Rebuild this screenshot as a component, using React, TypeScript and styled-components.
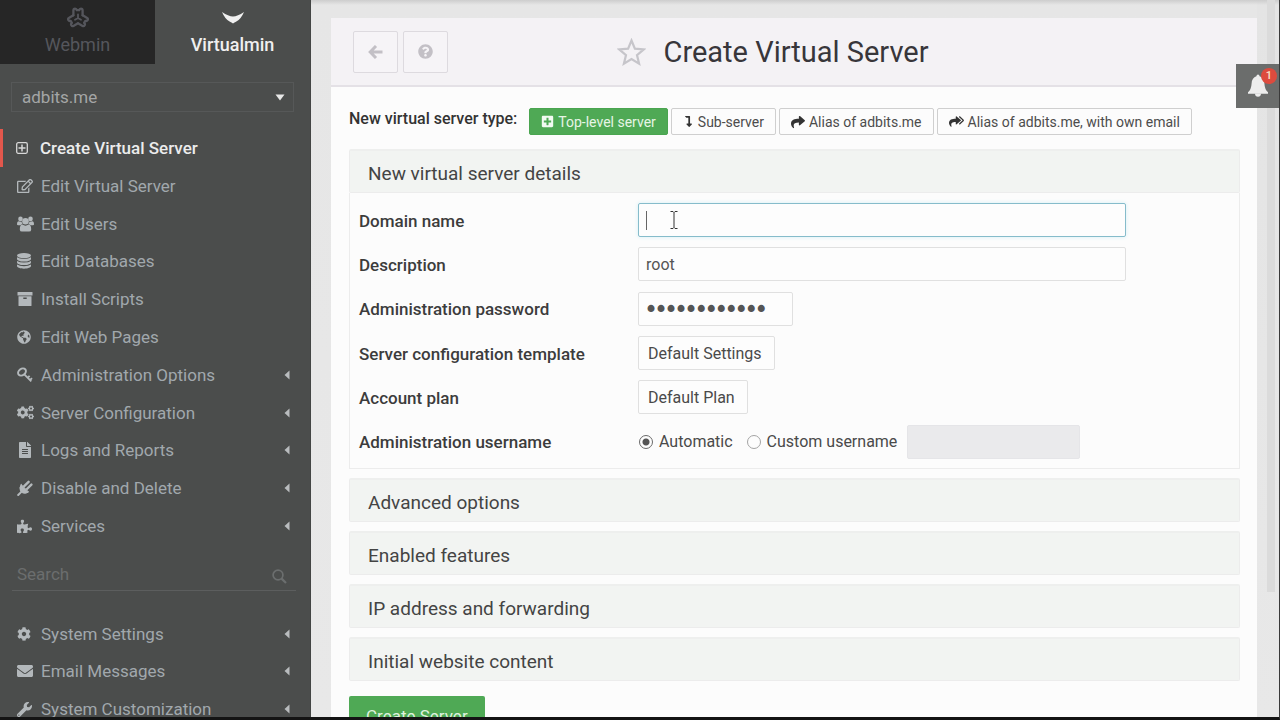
import React from "react";
import styled, { createGlobalStyle } from "styled-components";
import {
  FaRegEdit, FaGlobeAmericas, FaCogs, FaFileAlt,
  FaPuzzlePiece, FaCog, FaEnvelope, FaWrench, FaShare, FaQuestionCircle,
  FaPlusSquare, FaLevelDownAlt,
} from "react-icons/fa";

const GlobalStyle = createGlobalStyle`
  *, *::before, *::after { box-sizing: border-box; }
  body { margin: 0; background: #141414; overflow: hidden; }
  body, button, input, select { font-family: Roboto, "Liberation Sans", sans-serif; }
`;

const Frame = styled.div`
  height: 100vh;
  display: flex;
  border-bottom: 3px solid #141414;
  border-right: 1px solid #3a3a3a;
  overflow: hidden;
  position: relative;
`;

const Sidebar = styled.aside`
  flex: 0 0 311px;
  background: #4b4d4c;
  border-right: 1px solid #434544;
  overflow: hidden;
`;

const Tabs = styled.nav`
  display: grid;
  grid-template-columns: 1fr 1fr;
  height: 64px;
`;

const Tab = styled.a<{ $active?: boolean }>`
  display: flex;
  flex-direction: column;
  align-items: center;
  justify-content: space-between;
  padding: 7px 0 8px;
  text-decoration: none;
  font-size: 18px;
  line-height: 22px;
  font-weight: ${(p) => (p.$active ? 500 : 400)};
  color: ${(p) => (p.$active ? "#f0f0f0" : "#55565c")};
  background: ${(p) => (p.$active ? "transparent" : "#262626")};
`;

const DomainPicker = styled.div`
  margin: 18px 16px 17px 11px;
  position: relative;
`;

const DomainSelect = styled.select`
  appearance: none;
  display: block;
  width: 100%;
  height: 30px;
  padding: 0 10px;
  border: 1px solid #565858;
  border-radius: 0;
  background: transparent;
  color: #a4a6a6;
  font-size: 17px;
`;

const PickerArrow = styled.svg`
  position: absolute;
  right: 9px;
  top: 12px;
  pointer-events: none;
`;

const Menu = styled.ul<{ $height: number }>`
  list-style: none;
  margin: 0;
  padding: 0;
  display: grid;
  grid-auto-rows: 1fr;
  min-height: ${(p) => p.$height}px;
`;

const MenuItem = styled.li`
  display: flex;
`;

const MenuLink = styled.a<{ $active?: boolean }>`
  flex: 1;
  display: flex;
  align-items: center;
  padding: 0 20px 0 ${(p) => (p.$active ? 13 : 17)}px;
  border-left: ${(p) => (p.$active ? "3px solid #e2574c" : "0")};
  color: ${(p) => (p.$active ? "#ececec" : "#a1a8ad")};
  font-size: 17px;
  line-height: 22px;
  font-weight: ${(p) => (p.$active ? 500 : 400)};
  text-decoration: none;
`;

const MenuIcon = styled.span`
  flex: 0 0 24px;
  display: flex;
  align-items: center;
  color: #b3b8bb;
`;

const MenuText = styled.span`
  flex: 1;
  white-space: nowrap;
`;

const SearchBar = styled.div`
  display: flex;
  align-items: flex-end;
  justify-content: space-between;
  height: 34px;
  margin: 12px 14px 24px 12px;
  padding: 0 9px 6px 5px;
  border-bottom: 1px solid #5c5e5e;
  color: #6b6e6e;
`;

const SearchInput = styled.input`
  flex: 1;
  min-width: 0;
  height: 20px;
  border: 0;
  padding: 0;
  outline: 0;
  background: transparent;
  font-size: 17px;
  color: #a1a8ad;
  &::placeholder { color: #6b6e6e; }
`;

const Main = styled.main`
  flex: 1;
  min-width: 0;
  padding: 18px 0 0 20px;
  background: linear-gradient(#cdcdcd, #e6e6e6 5px, #e8e8e8 100%);
`;

const Panel = styled.section`
  background: #fcfcfc;
  min-height: 100%;
`;

const PanelHeader = styled.header`
  display: flex;
  align-items: center;
  height: 69px;
  padding: 0 165px 0 22px;
  background: #f4f2f5;
  border-bottom: 2px solid #e4e1e6;
`;

const HeaderButton = styled.button`
  width: 45px;
  height: 42px;
  margin-right: 5px;
  display: flex;
  align-items: center;
  justify-content: center;
  background: #f6f4f7;
  border: 1px solid #dddadf;
  border-radius: 2px;
  color: #c3c0c6;
  padding: 0;
`;

const TitleGroup = styled.div`
  flex: 1;
  display: flex;
  align-items: center;
  justify-content: center;
  gap: 18px;
  color: #c6c5ca;
`;

const Title = styled.h1`
  margin: 0;
  color: #38363a;
  font-size: 29px;
  line-height: 36px;
  font-weight: 400;
  white-space: nowrap;
`;

const PanelBody = styled.form`
  padding: 21px 17px 0 18px;
`;

const TypeBar = styled.div`
  display: flex;
  align-items: flex-start;
  gap: 3px;
  margin-bottom: 14px;
`;

const TypeLabel = styled.span`
  margin-right: 9px;
  color: #333;
  font-size: 16px;
  line-height: 22px;
  font-weight: 500;
  white-space: nowrap;
`;

const TypeButton = styled.button<{ $primary?: boolean }>`
  display: flex;
  align-items: center;
  gap: 4px;
  height: 27px;
  padding: 0 11px;
  border: 1px solid ${(p) => (p.$primary ? "#4aa550" : "#cfcfcf")};
  border-radius: 2px;
  background: ${(p) => (p.$primary ? "#4fa955" : "#fcfcfc")};
  color: ${(p) => (p.$primary ? "#e6f5e6" : "#4c4c4c")};
  font-size: 14px;
  white-space: nowrap;
  svg { color: ${(p) => (p.$primary ? "#f2fbf2" : "#333")}; }
`;

const Sections = styled.div`
  display: flex;
  flex-direction: column;
  gap: 9px;
`;

const Section = styled.section``;

const SectionToggle = styled.button`
  display: block;
  width: 100%;
  height: 44px;
  padding: 3px 18px 0;
  text-align: left;
  font-size: 19px;
  color: #444;
  background: #f2f4f2;
  border: 1px solid #ececec;
  border-top: 2px solid #eeefee;
  border-radius: 2px;
`;

const Fields = styled.div`
  display: grid;
  grid-auto-rows: 1fr;
  min-height: 276px;
  padding: 5px 9px 4px;
  border: 1px solid #ececec;
  border-top: 0;
`;

const Field = styled.div`
  display: grid;
  grid-template-columns: 279px 1fr;
  align-items: center;
`;

const FieldLabel = styled.label`
  padding-top: 1px;
  color: #3c3c3c;
  font-size: 17px;
  line-height: 22px;
  font-weight: 500;
`;

const Control = styled.div`
  display: flex;
  align-items: center;
  position: relative;
`;

const TextInput = styled.input<{ $width: number; $focus?: boolean }>`
  width: ${(p) => p.$width}px;
  height: 34px;
  padding: 0 7px;
  border: 1px solid ${(p) => (p.$focus ? "#86bccb" : "#e0e0e0")};
  border-radius: 2px;
  outline: 0;
  background: #fdfdfd;
  box-shadow: ${(p) => (p.$focus ? "0 0 4px #d5f0f6" : "none")};
  color: #555;
  font-size: 16px;
  caret-color: transparent;
  &[type="password"] {
    font-family: "DejaVu Sans", sans-serif;
    font-size: 17px;
    -webkit-text-stroke: 2px #555;
  }
  &:disabled {
    margin-left: 10px;
    border-color: #e5e5e8;
    background: #eaeaec;
  }
`;

const PlainSelect = styled.select`
  appearance: none;
  height: 34px;
  padding: 0 12px 0 9px;
  border: 1px solid #e0e0e0;
  border-radius: 2px;
  background: #fdfdfd;
  color: #4a4a4a;
  font-size: 16px;
`;

const Choice = styled.label`
  display: flex;
  align-items: center;
  gap: 5px;
  margin-right: 13px;
  color: #4a4a4a;
  font-size: 16px;
  line-height: 22px;
  &:last-of-type { margin-right: 0; }
`;

const Radio = styled.input`
  appearance: none;
  width: 14px;
  height: 14px;
  margin: 0 1px;
  border: 1px solid #a4a4a4;
  border-radius: 50%;
  background: #fdfdfd;
  &:checked {
    border-color: #6a6a6a;
    background: radial-gradient(circle, #555 0 3px, #fdfdfd 4px);
  }
`;

const Caret = styled.span`
  position: absolute;
  left: 8px;
  top: 8px;
  width: 1px;
  height: 19px;
  background: #666;
`;

const Pointer = styled.svg`
  position: absolute;
  left: 32px;
  top: 8px;
`;

const SubmitButton = styled.button`
  margin-top: 15px;
  height: 40px;
  padding: 0 17px;
  border: 0;
  border-radius: 2px;
  background: #4fa955;
  color: #dff2df;
  font-size: 17px;
`;

const Rail = styled.div`
  flex: 0 0 22px;
  padding: 0 4px 0 10px;
  background: linear-gradient(#cdcdcd, #e4e4e4 5px, #e8e8e8 100%);
`;

const Thumb = styled.div`
  height: 82.5%;
  background: #dbdbdb;
`;

const Notice = styled.button`
  position: absolute;
  right: 0;
  top: 64px;
  width: 43px;
  height: 44px;
  display: flex;
  align-items: center;
  justify-content: center;
  padding: 0;
  border: 0;
  background: #6b6d6c;
  color: #ededed;
`;

const NoticeBadge = styled.span`
  position: absolute;
  top: 4px;
  right: 2px;
  width: 16px;
  height: 16px;
  border-radius: 50%;
  background: #dd4b3e;
  color: #f8e3c8;
  font-size: 11px;
  font-weight: 500;
  line-height: 16px;
  text-align: center;
`;

const WebminLogo = () => (
  <svg width="22" height="21" viewBox="-11 -11 22 21" fill="none" stroke="currentColor" strokeWidth="2.300" strokeLinejoin="round" strokeLinecap="round">
    {[0, 120, 240].map((a) => (
      <path key={a} transform={`rotate(${a})`} d="M-4.600 -2.700V-7.500Q-4.600 -9.400 -2.900 -9.400Q-1.500 -9.400 -1.200 -7.800H1.200Q1.500 -9.400 2.900 -9.400Q4.600 -9.400 4.600 -7.500V-2.700" />
    ))}
    <path d="M0 0V-3.500M0 0L3 1.750M0 0L-3 1.750" strokeWidth="1.800" />
  </svg>
);

const VirtualminLogo = () => (
  <svg width="22" height="21" viewBox="0 0 22 21" fill="currentColor">
    <path d="M0 5Q6.500 9.400 11 9.600Q15.500 9.400 22 5Q18.800 12.600 14 14.800Q12.500 15.400 11 16.400Q9.500 15.400 8 14.800Q3.200 12.600 0 5Z" />
  </svg>
);

const StarOutline = () => (
  <svg width="29" height="28" viewBox="0 0 29 28" fill="none" stroke="currentColor" strokeWidth="2.200" aria-hidden="true">
    <path d="M14.500 2.500L17.900 10.700L26.800 11.400L20 17.100L22.100 25.700L14.500 21.100L6.900 25.700L9 17.100L2.200 11.400L11.100 10.700Z" />
  </svg>
);

const PlusBox = () => (
  <svg width="12" height="12" viewBox="0 0 12 12" fill="none" stroke="#d8d8d8">
    <rect x="0.700" y="0.700" width="10.600" height="10.600" rx="1.500" strokeWidth="1.300" />
    <path d="M6 2.500V9.500M2.500 6H9.500" strokeWidth="1.500" />
  </svg>
);

const UsersIcon = () => (
  <svg width="17" height="16" viewBox="0 0 17 16" fill="currentColor">
    <circle cx="3.500" cy="2.900" r="2.300" />
    <circle cx="13.500" cy="2.900" r="2.300" />
    <path d="M0 8.500Q0 5.300 1.800 5.300Q3.200 6.100 4.600 5.600Q4.600 7 5.600 8Q4.200 8.200 3.400 9.300H1.200Q0 9.300 0 8.500ZM17 8.500Q17 5.300 15.200 5.300Q13.800 6.100 12.400 5.600Q12.400 7 11.400 8Q12.800 8.200 13.600 9.300H15.800Q17 9.300 17 8.500Z" />
    <circle cx="8.500" cy="5.200" r="3.300" />
    <path d="M2.800 13.400Q2.800 8.600 5.500 8.600Q8.500 10.700 11.500 8.600Q14.200 8.600 14.200 13.400Q14.200 15.600 12 15.600H5Q2.800 15.600 2.800 13.400Z" />
  </svg>
);

const DatabaseIcon = () => (
  <svg width="14" height="16" viewBox="0 0 14 16" fill="currentColor">
    <ellipse cx="7" cy="2.600" rx="7" ry="2.600" />
    {[0, 3.6, 7.2].map((dy) => (
      <path key={dy} transform={`translate(0 ${dy})`} d="M0 4.300Q2.500 6 7 6Q11.500 6 14 4.300V5.900C14 7.300 10.900 8.500 7 8.500S0 7.300 0 5.900Z" />
    ))}
  </svg>
);

const ArchiveIcon = () => (
  <svg width="16" height="14" viewBox="0 0 16 14" fill="currentColor">
    <path d="M1 0H15Q15.500 0 15.500 0.500V3.500H0.500V0.500Q0.500 0 1 0Z" />
    <path fillRule="evenodd" d="M1.500 4.300H14.500V13.500Q14.500 14 14 14H2Q1.500 14 1.500 13.500ZM6.300 5.600V6.900H9.700V5.600Z" />
  </svg>
);

const PlugIcon = () => (
  <svg width="16" height="16" viewBox="0 0 16 16" fill="currentColor" stroke="currentColor" strokeLinecap="round">
    <path d="M4.200 4.600L11.600 12Q8.500 14.300 5.200 12.700L3.500 11Q1.900 7.700 4.200 4.600Z" strokeWidth="1" strokeLinejoin="round" />
    <path d="M7.200 6.200L11.600 1.800M10 9L14.400 4.600" strokeWidth="2.400" />
    <path d="M4.600 11.600L1.200 15" strokeWidth="2" />
  </svg>
);

const KeyIcon = () => (
  <svg width="16" height="16" viewBox="0 0 16 16" fill="none" stroke="currentColor">
    <ellipse cx="5" cy="5" rx="4.200" ry="3.200" transform="rotate(-38 5 5)" strokeWidth="2" />
    <path d="M7.300 7.300L14.300 14.300M10.600 10.800L12.600 8.800M13 13.200L15 11.200" strokeWidth="1.900" />
  </svg>
);

const SearchIcon = () => (
  <svg width="15" height="15" viewBox="0 0 15 15" fill="none" stroke="currentColor" strokeWidth="1.700" aria-hidden="true">
    <circle cx="6" cy="6" r="4.900" />
    <path d="M9.600 9.600L14 14" strokeWidth="2.200" />
  </svg>
);

const BackArrow = () => (
  <svg width="15" height="14" viewBox="0 0 15 14" fill="none" stroke="currentColor" strokeWidth="3">
    <path d="M8 1L2.200 7L8 13M2.500 7H14.500" />
  </svg>
);

const BellIcon = () => (
  <svg width="22" height="24" viewBox="0 0 22 24" fill="currentColor">
    <path d="M11 0.500Q12.400 0.500 12.600 2.300Q17 3.500 17.400 9.500Q17.700 15.500 21 18.300V19.800H1V18.300Q4.300 15.500 4.600 9.500Q5 3.500 9.400 2.300Q9.600 0.500 11 0.500Z" />
    <path d="M8 19.500H14Q13.800 22.800 11 22.800Q8.200 22.800 8 19.500Z" />
  </svg>
);

const DoubleShare = () => (
  <svg width="15" height="13" viewBox="0 0 640 512" fill="currentColor">
    <path d="M503.700 189.800L327.700 37.800C312.300 24.500 288 35.300 288 56v80.100C127.400 137.900 0 170.100 0 322.300c0 61.400 39.600 122.300 83.300 154.100 13.700 9.900 33.100-2.500 28.100-18.600C66.100 312.800 132.900 274.300 288 272.100V360c0 20.700 24.300 31.500 39.700 18.200l176-152c11.100-9.600 11.100-26.800 0-36.400z" />
    <path d="M440 45L600 190Q618 208 600 226L440 371" fill="none" stroke="currentColor" strokeWidth="52" />
  </svg>
);

const Collapsed = () => (
  <svg width="6" height="10" viewBox="0 0 6 10" fill="#b9bcbe" aria-hidden="true">
    <path d="M5.500 0.500V9.500L0.500 5Z" />
  </svg>
);

type Entry = { label: string; icon: React.ReactNode; active?: boolean; sub?: boolean };

const serverMenu: Entry[] = [
  { label: "Create Virtual Server", icon: <PlusBox />, active: true },
  { label: "Edit Virtual Server", icon: <FaRegEdit size={16} /> },
  { label: "Edit Users", icon: <UsersIcon /> },
  { label: "Edit Databases", icon: <DatabaseIcon /> },
  { label: "Install Scripts", icon: <ArchiveIcon /> },
  { label: "Edit Web Pages", icon: <FaGlobeAmericas size={14} /> },
  { label: "Administration Options", icon: <KeyIcon />, sub: true },
  { label: "Server Configuration", icon: <FaCogs size={17} />, sub: true },
  { label: "Logs and Reports", icon: <FaFileAlt size={16} />, sub: true },
  { label: "Disable and Delete", icon: <PlugIcon />, sub: true },
  { label: "Services", icon: <FaPuzzlePiece size={15} />, sub: true },
];

const systemMenu: Entry[] = [
  { label: "System Settings", icon: <FaCog size={14} />, sub: true },
  { label: "Email Messages", icon: <FaEnvelope size={16} />, sub: true },
  { label: "System Customization", icon: <FaWrench size={15} />, sub: true },
];

const MenuList = ({ items, height }: { items: Entry[]; height: number }) => (
  <Menu $height={height}>
    {items.map((item) => (
      <MenuItem key={item.label}>
        <MenuLink href="#" $active={item.active}>
          <MenuIcon>{item.icon}</MenuIcon>
          <MenuText>{item.label}</MenuText>
          {item.sub && <Collapsed />}
        </MenuLink>
      </MenuItem>
    ))}
  </Menu>
);

export default function App() {
  return (
    <>
      <GlobalStyle />
      <Frame>
        <Sidebar>
          <Tabs>
            <Tab href="#"><WebminLogo />Webmin</Tab>
            <Tab href="#" $active><VirtualminLogo />Virtualmin</Tab>
          </Tabs>
          <DomainPicker>
            <DomainSelect aria-label="Domain">
              <option>adbits.me</option>
            </DomainSelect>
            <PickerArrow width="10" height="7" viewBox="0 0 10 7" fill="#e8e8e8"><path d="M0.500 0.500H9.500L5 6.500Z" /></PickerArrow>
          </DomainPicker>
          <MenuList items={serverMenu} height={416} />
          <SearchBar>
            <SearchInput type="text" placeholder="Search" aria-label="Search" />
            <SearchIcon />
          </SearchBar>
          <MenuList items={systemMenu} height={113} />
        </Sidebar>
        <Main>
          <Panel>
            <PanelHeader>
              <HeaderButton type="button" aria-label="Back"><BackArrow /></HeaderButton>
              <HeaderButton type="button" aria-label="Help"><FaQuestionCircle size={15} /></HeaderButton>
              <TitleGroup>
                <StarOutline />
                <Title>Create Virtual Server</Title>
              </TitleGroup>
            </PanelHeader>
            <PanelBody>
              <TypeBar>
                <TypeLabel>New virtual server type:</TypeLabel>
                <TypeButton type="button" $primary><FaPlusSquare size={13} />Top-level server</TypeButton>
                <TypeButton type="button"><FaLevelDownAlt size={11} />Sub-server</TypeButton>
                <TypeButton type="button"><FaShare size={14} />Alias of adbits.me</TypeButton>
                <TypeButton type="button"><DoubleShare />Alias of adbits.me, with own email</TypeButton>
              </TypeBar>
              <Sections>
                <Section>
                  <SectionToggle type="button">New virtual server details</SectionToggle>
                  <Fields>
                    <Field>
                      <FieldLabel htmlFor="dom">Domain name</FieldLabel>
                      <Control>
                        <TextInput id="dom" type="text" $width={488} $focus />
                        <Caret />
                        <Pointer width="8" height="18" viewBox="0 0 8 18" fill="none" stroke="#333" aria-hidden="true">
                          <path d="M0.500 0.500H3L4 1.500L5 0.500H7.500M4 1.500V16.500M0.500 17.500H3L4 16.500L5 17.500H7.500" />
                        </Pointer>
                      </Control>
                    </Field>
                    <Field>
                      <FieldLabel htmlFor="desc">Description</FieldLabel>
                      <Control><TextInput id="desc" type="text" defaultValue="root" $width={488} /></Control>
                    </Field>
                    <Field>
                      <FieldLabel htmlFor="pass">Administration password</FieldLabel>
                      <Control><TextInput id="pass" type="password" defaultValue="abcdefghijkl" $width={155} /></Control>
                    </Field>
                    <Field>
                      <FieldLabel htmlFor="tmpl">Server configuration template</FieldLabel>
                      <Control><PlainSelect id="tmpl"><option>Default Settings</option></PlainSelect></Control>
                    </Field>
                    <Field>
                      <FieldLabel htmlFor="plan">Account plan</FieldLabel>
                      <Control><PlainSelect id="plan"><option>Default Plan</option></PlainSelect></Control>
                    </Field>
                    <Field>
                      <FieldLabel htmlFor="custom">Administration username</FieldLabel>
                      <Control>
                        <Choice><Radio type="radio" name="user" defaultChecked />Automatic</Choice>
                        <Choice><Radio type="radio" name="user" />Custom username</Choice>
                        <TextInput id="custom" type="text" disabled $width={173} />
                      </Control>
                    </Field>
                  </Fields>
                </Section>
                <SectionToggle type="button">Advanced options</SectionToggle>
                <SectionToggle type="button">Enabled features</SectionToggle>
                <SectionToggle type="button">IP address and forwarding</SectionToggle>
                <SectionToggle type="button">Initial website content</SectionToggle>
              </Sections>
              <SubmitButton type="submit">Create Server</SubmitButton>
            </PanelBody>
          </Panel>
        </Main>
        <Rail><Thumb /></Rail>
        <Notice type="button" aria-label="Notifications, 1 new">
          <BellIcon />
          <NoticeBadge>1</NoticeBadge>
        </Notice>
      </Frame>
    </>
  );
}
